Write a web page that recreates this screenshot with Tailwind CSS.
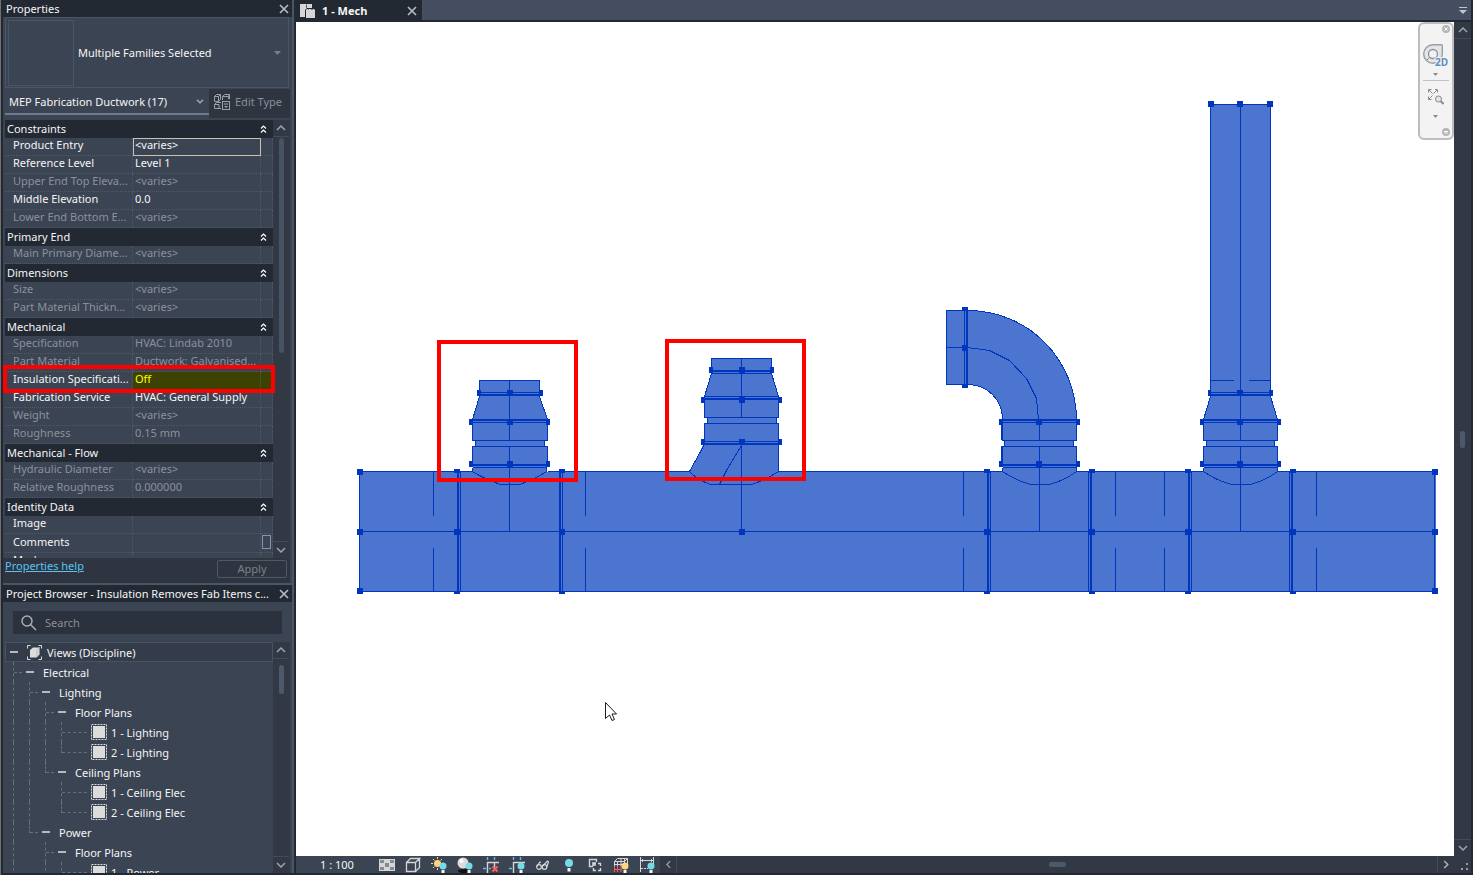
<!DOCTYPE html>
<html lang="en">
<head>
    <meta charset="UTF-8">
    <meta name="viewport" content="width=device-width, initial-scale=1.0">
    <title>1 - Mech</title>
    <script src="https://cdn.jsdelivr.net/npm/@tailwindcss/browser@4"></script>
</head>
<body class="flex h-screen overflow-hidden bg-[#222933] font-['Noto_Sans','Open_Sans',sans-serif] text-[11px] leading-4 text-[#f5f5f5]">
    <!-- Shared icons -->
    <svg class="hidden">
        <symbol id="close" viewBox="0 0 10 10"><path d="M1 1l8 8M9 1L1 9" stroke="#b4b9c2" stroke-width="1.7" fill="none"/></symbol>
        <symbol id="up" viewBox="0 0 10 6"><path d="M1 5l4-4 4 4" stroke="#9aa3b0" stroke-width="1.5" fill="none"/></symbol>
        <symbol id="down" viewBox="0 0 10 6"><path d="M1 1l4 4 4-4" stroke="#9aa3b0" stroke-width="1.5" fill="none"/></symbol>
        <symbol id="collapse" viewBox="0 0 7 8"><path d="M1 3.5l2.500-2.500 2.500 2.500M1 7.500l2.500-2.500 2.500 2.500" stroke="#fff" stroke-width="1.2" fill="none"/></symbol>
        <symbol id="plan" viewBox="0 0 16 16"><rect x=".5" y=".5" width="15" height="15" fill="none" stroke="#dcdcdc" stroke-dasharray="2 1"/><rect x="2" y="2" width="12" height="12" fill="#dcdcdc"/></symbol>
    </svg>

    <!-- Docked panels -->
    <aside class="flex w-[296px] shrink-0 flex-col border-l border-[#707070] pl-[2px] pr-[2px] pb-[2px]">
        <div class="flex min-h-0 grow flex-col border-r-2 border-[#4a5566]">
            <!-- Properties -->
            <section class="flex h-[585px] shrink-0 flex-col border-b-2 border-[#4a5566] bg-[#3b4453]">
                <header class="flex h-[17px] items-center justify-between bg-[#222933] pl-[3px] pr-[3px]">
                    <h2>Properties</h2>
                    <button aria-label="Close properties"><svg class="size-[10px]"><use href="#close"/></svg></button>
                </header>
                <div class="ml-[2px] mr-[3px] flex h-[71px] items-center border border-[#4a5566] pl-[2px] pr-[7px]">
                    <div class="size-[66px] border border-[#4a5566]"></div>
                    <span class="grow pl-1">Multiple Families Selected</span>
                    <svg class="h-1 w-[7px]" viewBox="0 0 7 4"><path d="M0 0h7L3.500 4z" fill="#74808f"/></svg>
                </div>
                <div class="mx-[2px] flex h-8 pt-px">
                    <div class="relative flex h-[26px] w-[204px] items-center border-b-2 border-[#6c7a90]">
                        <select aria-label="Category filter" class="h-full w-full appearance-none bg-transparent pl-1 pt-px outline-none">
                            <option>MEP Fabrication Ductwork (17)</option>
                        </select>
                        <svg class="pointer-events-none absolute right-[5px] h-[5px] w-[8px]" viewBox="0 0 8 5"><path d="M1 .8l3 3 3-3" stroke="#9aa3b0" stroke-width="1.600" fill="none"/></svg>
                    </div>
                    <button class="flex h-[29px] grow items-center gap-[5px] whitespace-nowrap bg-[#2e3440] pb-1 pl-[5px] text-[#8a8f98]">
                        <svg class="size-4" viewBox="0 0 16 16" fill="none" stroke="#9b9fa6"><path d="M.5 7.500v-5l2-2h4l-2 2h-4m4 0v5h-4M6.500.5v5l-2 2M8.500 6V2.500l2-2h5l-1 2h-6m6 0V5m1-4.500V5M7 14.500H.5v-4l2-2H7m-6.500 2H5v4"/><rect x="8.500" y="7.500" width="7" height="8"/><path d="M10 10h4M10.500 12.500h3M12 12v2"/></svg>
                        Edit Type
                    </button>
                </div>
                <div class="ml-[2px] flex h-[438px]">
                    <div class="w-[268px] overflow-hidden">
                        <table class="w-full table-fixed border-separate border-spacing-0 text-left [&_button]:block [&_td]:h-[18px] [&_td]:overflow-hidden [&_td]:border-b [&_td]:border-r [&_td]:border-dotted [&_td]:border-[#4d5868] [&_td]:pl-[2px] [&_td]:whitespace-nowrap [&_td]:pt-0 [&_td]:pb-[3px] [&_td]:leading-[14px] [&_td:first-child]:pl-2 [&_th]:h-[18px] [&_th]:bg-[#222933] [&_th]:pl-[2px] [&_th]:font-normal [&_tr]:h-[18px]">
                            <colgroup><col class="w-[128px]"><col class="w-[128px]"><col class="w-[12px]"></colgroup>
                            <tbody>
                                <tr><th colspan="2">Constraints</th><th><button aria-label="Collapse Constraints" class="-ml-[3px] h-2"><svg class="h-2 w-[7px]"><use href="#collapse"/></svg></button></th></tr>
                                <tr><td>Product Entry</td><td class="outline outline-[#cfc0ae] -outline-offset-1">&lt;varies&gt;</td><td></td></tr>
                                <tr><td>Reference Level</td><td>Level 1</td><td></td></tr>
                                <tr class="text-[#8b919b]"><td>Upper End Top Eleva...</td><td>&lt;varies&gt;</td><td></td></tr>
                                <tr><td>Middle Elevation</td><td>0.0</td><td></td></tr>
                                <tr class="text-[#8b919b]"><td>Lower End Bottom E...</td><td>&lt;varies&gt;</td><td></td></tr>
                            </tbody>
                            <tbody>
                                <tr><th colspan="2">Primary End</th><th><button aria-label="Collapse Primary End" class="-ml-[3px] h-2"><svg class="h-2 w-[7px]"><use href="#collapse"/></svg></button></th></tr>
                                <tr class="text-[#8b919b]"><td>Main Primary Diame...</td><td>&lt;varies&gt;</td><td></td></tr>
                            </tbody>
                            <tbody>
                                <tr><th colspan="2">Dimensions</th><th><button aria-label="Collapse Dimensions" class="-ml-[3px] h-2"><svg class="h-2 w-[7px]"><use href="#collapse"/></svg></button></th></tr>
                                <tr class="text-[#8b919b]"><td>Size</td><td>&lt;varies&gt;</td><td></td></tr>
                                <tr class="text-[#8b919b]"><td>Part Material Thickn...</td><td>&lt;varies&gt;</td><td></td></tr>
                            </tbody>
                            <tbody>
                                <tr><th colspan="2">Mechanical</th><th><button aria-label="Collapse Mechanical" class="-ml-[3px] h-2"><svg class="h-2 w-[7px]"><use href="#collapse"/></svg></button></th></tr>
                                <tr class="text-[#8b919b]"><td>Specification</td><td>HVAC: Lindab 2010</td><td></td></tr>
                                <tr class="text-[#8b919b]"><td>Part Material</td><td>Ductwork: Galvanised...</td><td></td></tr>
                                <tr><td>Insulation Specificati...</td><td class="bg-[#3d4200] text-[#ffff00]">Off</td><td class="bg-[#3d4200]"></td></tr>
                                <tr><td>Fabrication Service</td><td>HVAC: General Supply</td><td></td></tr>
                                <tr class="text-[#8b919b]"><td>Weight</td><td>&lt;varies&gt;</td><td></td></tr>
                                <tr class="text-[#8b919b]"><td>Roughness</td><td>0.15 mm</td><td></td></tr>
                            </tbody>
                            <tbody>
                                <tr><th colspan="2">Mechanical - Flow</th><th><button aria-label="Collapse Mechanical - Flow" class="-ml-[3px] h-2"><svg class="h-2 w-[7px]"><use href="#collapse"/></svg></button></th></tr>
                                <tr class="text-[#8b919b]"><td>Hydraulic Diameter</td><td>&lt;varies&gt;</td><td></td></tr>
                                <tr class="text-[#8b919b]"><td>Relative Roughness</td><td>0.000000</td><td></td></tr>
                            </tbody>
                            <tbody>
                                <tr><th colspan="2">Identity Data</th><th><button aria-label="Collapse Identity Data" class="-ml-[3px] h-2"><svg class="h-2 w-[7px]"><use href="#collapse"/></svg></button></th></tr>
                                <tr><td>Image</td><td></td><td></td></tr>
                                <tr><td>Comments</td><td></td><td><button aria-label="Edit comments" class="-ml-px mt-px h-[14px] w-[9px] border border-[#8494ad]"></button></td></tr>
                                <tr><td>Mark</td><td></td><td></td></tr>
                            </tbody>
                        </table>
                    </div>
                    <div class="flex w-[17px] flex-col items-center bg-[#323945] pr-px">
                        <div class="flex h-[17px] w-full items-center justify-center border-b border-[#414c5b]"><svg class="h-[6px] w-[10px]"><use href="#up"/></svg></div>
                        <div class="mt-px h-[215px] w-[5px] rounded-full bg-[#465363]"></div>
                        <div class="mt-auto flex h-[17px] w-full items-center justify-center border-t border-[#414c5b]"><svg class="h-[6px] w-[10px]"><use href="#down"/></svg></div>
                    </div>
                </div>
                <footer class="mr-[2px] flex grow justify-between bg-[#2e3440] pl-[2px]">
                    <a href="#" class="text-[#5cc3f0] underline">Properties help</a>
                    <button class="mr-[3px] mt-[2px] h-[18px] w-[70px] rounded-xs border border-[#505865] text-[#7c828c]">Apply</button>
                </footer>
            </section>

            <!-- Project Browser -->
            <section class="flex min-h-0 grow flex-col bg-[#3b4453]">
                <header class="flex h-[17px] shrink-0 items-center justify-between bg-[#222933] pl-[3px] pr-[3px]">
                    <h2 class="whitespace-nowrap">Project Browser - Insulation Removes Fab Items c...</h2>
                    <button aria-label="Close project browser"><svg class="size-[10px]"><use href="#close"/></svg></button>
                </header>
                <label class="mt-[9px] mb-2 ml-[10px] mr-[10px] flex h-[23px] shrink-0 items-center gap-2 bg-[#2b313d] pl-2">
                    <svg class="size-4 shrink-0" viewBox="0 0 16 16" fill="none" stroke="#a9adb5" stroke-width="1.500"><circle cx="6" cy="6" r="5"/><path d="M9.500 9.500L15 15"/></svg>
                    <input type="search" aria-label="Search" placeholder="Search" class="w-full min-w-0 bg-transparent outline-none placeholder:text-[#8a8f98]">
                </label>
                <div class="ml-[2px] flex min-h-0 grow">
                    <ul class="w-[268px] shrink-0 overflow-hidden [&_li]:flex [&_li]:h-5 [&_li]:items-center [&_i]:h-full [&_i]:w-4 [&_i]:shrink-0 [&_i]:border-l [&_i]:border-dashed [&_i]:border-[#666f7c] [&_b]:block [&_b]:h-[11px] [&_b]:w-2 [&_b]:border-b [&_b]:border-dashed [&_b]:border-[#666f7c] [&_button]:mr-[9px] [&_button]:h-[2px] [&_button]:w-2 [&_button]:bg-[#b4b9c2] [&_span]:pt-px">
                        <li class="border border-[#465363] bg-[#343c4a] pl-1"><button aria-label="Toggle Views"></button><svg class="mr-[5px] size-[15px]" viewBox="0 0 15 15" fill="none" stroke="#dcdcdc"><path d="M.5 3.500v-3h3M11.500.5h3v3M14.500 11.500v3h-3M3.500 14.500h-3v-3"/><path d="M3 5l3-2.500h6.500v7L9.500 12.500H3z" fill="#dcdcdc" stroke="none"/><path d="M10 12V5.500l2.500-3" stroke="#b4b9c2"/></svg><span>Views (Discipline)</span></li>
                        <li class="pl-2"><i class="max-w-[13px]"><b></b></i><button aria-label="Toggle Electrical"></button><span>Electrical</span></li>
                        <li class="pl-2"><i></i><i class="max-w-[13px]"><b></b></i><button aria-label="Toggle Lighting"></button><span>Lighting</span></li>
                        <li class="pl-2"><i></i><i></i><i class="max-w-[13px]"><b></b></i><button aria-label="Toggle Floor Plans"></button><span>Floor Plans</span></li>
                        <li class="pl-2"><i></i><i></i><i></i><i class="min-w-[30px]"><b class="min-w-[25px]"></b></i><svg class="mr-1 size-4"><use href="#plan"/></svg><span>1 - Lighting</span></li>
                        <li class="pl-2"><i></i><i></i><i></i><i class="mb-auto max-h-[11px] min-w-[30px]"><b class="min-w-[25px]"></b></i><svg class="mr-1 size-4"><use href="#plan"/></svg><span>2 - Lighting</span></li>
                        <li class="pl-2"><i></i><i></i><i class="mb-auto max-h-[11px] max-w-[13px]"><b></b></i><button aria-label="Toggle Ceiling Plans"></button><span>Ceiling Plans</span></li>
                        <li class="pl-2"><i></i><i class="mr-4"></i><i class="min-w-[30px]"><b class="min-w-[25px]"></b></i><svg class="mr-1 size-4"><use href="#plan"/></svg><span>1 - Ceiling Elec</span></li>
                        <li class="pl-2"><i></i><i class="mr-4"></i><i class="mb-auto max-h-[11px] min-w-[30px]"><b class="min-w-[25px]"></b></i><svg class="mr-1 size-4"><use href="#plan"/></svg><span>2 - Ceiling Elec</span></li>
                        <li class="pl-2"><i></i><i class="mb-auto max-h-[11px] max-w-[13px]"><b></b></i><button aria-label="Toggle Power"></button><span>Power</span></li>
                        <li class="pl-2"><i class="mr-4"></i><i class="max-w-[13px]"><b></b></i><button aria-label="Toggle Power Floor Plans"></button><span>Floor Plans</span></li>
                        <li class="pl-2"><i class="mr-4"></i><i></i><i class="min-w-[30px]"><b class="min-w-[25px]"></b></i><svg class="mr-1 size-4"><use href="#plan"/></svg><span>1 - Power</span></li>
                    </ul>
                    <div class="flex w-[17px] flex-col items-center bg-[#323945] pr-px">
                        <div class="flex h-[17px] w-full shrink-0 items-center justify-center border-b border-[#414c5b]"><svg class="h-[6px] w-[10px]"><use href="#up"/></svg></div>
                        <div class="mt-[6px] h-[29px] w-[5px] rounded-full bg-[#4b596b]"></div>
                        <div class="mt-auto flex h-[17px] w-full items-center justify-center border-t border-[#414c5b]"><svg class="h-[6px] w-[10px]"><use href="#down"/></svg></div>
                    </div>
                </div>
            </section>
        </div>
    </aside>
    <!-- Callout round the Insulation Specification row -->
    <div class="pointer-events-none absolute left-[3px] top-[365px] h-7 w-[272px] border-4 border-[#ff0000]"></div>

    <!-- Drawing area -->
    <main class="flex min-w-0 grow flex-col pr-[2px] pb-[2px]">
        <!-- View tabs -->
        <nav class="flex h-[22px] shrink-0 bg-[#222933]">
            <div class="flex w-[126px] items-center pl-1 pr-[5px]">
                <svg class="size-4" viewBox="0 0 16 16"><path d="M0 1h6v5H5v8H0zM7 1h5v4H7zM6 6h8l1 1v8H6z" fill="#d6d6d6"/><path d="M6.500 1v5M5 6.500h4M11 6.500h4" stroke="#7a7f87" stroke-dasharray="2 1"/></svg>
                <span class="grow pl-[6px] font-bold">1 - Mech</span>
                <button aria-label="Close 1 - Mech"><svg class="size-[10px]"><use href="#close"/></svg></button>
            </div>
            <div class="flex h-5 grow items-center justify-end bg-[#454e60] pr-1">
                <svg class="h-[7px] w-2" viewBox="0 0 8 7"><path d="M0 0h8v1H0zM0 3h8L4 7z" fill="#c0c4cb"/></svg>
            </div>
        </nav>

        <div class="flex min-h-0 grow">
            <div class="relative min-w-0 grow bg-white">
                <svg class="block h-full w-full" viewBox="296 22 1158 834" role="img" aria-label="Ductwork elevation">
                    <g transform="translate(.5 .5)" fill="#4b75cf" stroke="#0036bd" shape-rendering="crispEdges">
                        <!-- Trunk -->
                        <path d="M359 471h1076v120H359z" stroke="none"/>
                        <path fill="none" d="M472 471H359v120h1075V471h-157M547 471h184M752 471h250M1076 471h127M359 531h1076"/>
                        <path fill="none" d="M460 471v120M562 471v120M990 471v120M1088 471v120M1191 471v120M1289 471v120"/>
                        <path fill="none" d="M433 471v44m0 32v44M585 471v44m0 32v44M963 471v44m0 32v44M1115 471v44m0 32v44M1164 471v44m0 32v44M1316 471v44m0 32v44"/>
                        <!-- First branch -->
                        <path d="M479 380h60v15l8 25v20h-3v6h3v18l-1 7q-18 13-37 13t-37-13v-25h3v-6h-3v-20l7-25z" stroke="none"/>
                        <path fill="none" d="M479 394v-14h60v14M479 392h60M479 396l-7 23M539 396l8 23M472 422h75M472 420v20h75v-20M475 440v6M544 440v6M472 464v-18h75v18M472 467h74M472 467v4q11 7 28 13h19q15-5 27-13v-4M509 380v60M509 446v85"/>
                        <!-- Second branch -->
                        <path d="M711 358h60v15l7 25v19h-2v6h2v49q-14 8-27 12h-41q-14-5-21-13l15-29v-19h3v-6h-3v-19l7-25z" stroke="none"/>
                        <path fill="none" d="M711 370v-12h60v12M711 373h60M711 373l-7 23h74l-7-23M704 396v21h74v-21M707 417v6M776 417v6M704 442v-19h74v48q-14 9-27 13h-41q-14-5-21-13l15-27M704 441h74M741 445l-15 25-7 14M741 358v59M741 444v87"/>
                        <!-- Elbow branch -->
                        <path d="M946 310h21c61 0 109 49 109 110v20h-3v6h3v25q-17 13-37 13t-37-13v-25h2v-6h-2v-21c0-20-15-35-35-35h-21z" stroke="none"/>
                        <path fill="none" d="M967 310h-21v74h21M967 310c61 0 109 49 109 110M967 384c20 0 35 15 35 35M964 310v74M946 347h21l22 3 20 10 17 18 10 20 2 22M1002 422h74M1002 420v20h74v-20M1004 440v6M1073 440v6M1002 464v-18h74v18M1002 467h74M1002 467v4q13 9 28 13h19q15-4 27-13v-4M1039 420v20M1039 446v85"/>
                        <!-- Riser branch -->
                        <path d="M1210 104h60v291l7 25v20h-3v6h3v25q-17 13-37 13t-37-13v-25h3v-6h-3v-20l7-25z" stroke="none"/>
                        <path fill="none" d="M1210 394V104h60v290M1210 380h23M1248 380h22M1210 392h60M1210 396l-7 23M1270 396l7 23M1203 422h74M1203 420v20h74v-20M1206 440v6M1274 440v6M1203 464v-18h74v18M1203 467h74M1203 467v4q13 9 28 13h19q15-4 27-13v-4M1240 104v336M1240 446v85"/>
                    </g>
                    <!-- Flanges and grips -->
                    <g fill="#0036bd" shape-rendering="crispEdges">
                        <path d="M457 471h2v120h-2zM559 471h2v120h-2zM987 471h2v120h-2zM1090 471h2v120h-2zM1188 471h2v120h-2zM1291 471h2v120h-2z"/>
                        <path d="M479 394h61v2h-61zM472 419h76v2h-76zM472 464h76v2h-76zM711 370h61v2h-61zM704 398h75v2h-75zM704 443h75v2h-75zM966 310h2v75h-2zM1002 419h75v2h-75zM1002 464h75v2h-75zM1210 394h61v2h-61zM1203 419h75v2h-75zM1203 464h75v2h-75zM1001 420h2v20h-2zM1001 446h2v19h-2z"/>
                        <path d="M357 469h6v6h-6zM357 529h6v6h-6zM357 588h6v6h-6zM1432 469h6v6h-6zM1432 529h6v6h-6zM1432 588h6v6h-6zM739 529h6v6h-6z"/>
                        <path d="M454 469h6v4h-6zM559 469h6v4h-6zM984 469h6v4h-6zM1089 469h6v4h-6zM1185 469h6v4h-6zM1290 469h6v4h-6z"/>
                        <path d="M454 529h6v6h-6zM559 529h6v6h-6zM984 529h6v6h-6zM1089 529h6v6h-6zM1185 529h6v6h-6zM1290 529h6v6h-6z"/>
                        <path d="M454 591h6v3h-6zM559 591h6v3h-6zM984 591h6v3h-6zM1089 591h6v3h-6zM1185 591h6v3h-6zM1290 591h6v3h-6z"/>
                        <path d="M477 390h4v6h-4zM507 390h6v6h-6zM539 390h4v6h-4zM469 419h4v6h-4zM507 419h6v6h-6zM546 419h4v6h-4zM469 461h4v6h-4zM507 461h6v6h-6zM546 461h4v6h-4z"/>
                        <path d="M709 367h4v6h-4zM739 367h6v6h-6zM770 367h4v6h-4zM701 397h4v6h-4zM739 397h6v6h-6zM778 397h4v6h-4zM701 439h4v6h-4zM739 439h6v6h-6zM778 439h4v6h-4z"/>
                        <path d="M962 307h6v4h-6zM962 345h6v6h-6zM962 384h6v4h-6zM999 419h4v6h-4zM1036 419h6v6h-6zM1076 419h4v6h-4zM999 461h4v6h-4zM1036 461h6v6h-6zM1076 461h4v6h-4z"/>
                        <path d="M1208 101h6v6h-6zM1237 101h6v6h-6zM1267 101h6v6h-6zM1208 390h3v6h-3zM1237 390h6v6h-6zM1269 390h4v6h-4zM1200 419h4v6h-4zM1237 419h6v6h-6zM1277 419h4v6h-4zM1200 461h4v6h-4zM1237 461h6v6h-6zM1277 461h4v6h-4z"/>
                    </g>
                    <!-- Callouts -->
                    <g fill="none" stroke="#ff0000" stroke-width="4">
                        <path d="M439 342h137v138H439z"/>
                        <path d="M667 341h137v138H667z"/>
                    </g>
                    <path d="M605.500 702.500v16l4-3.500 2.500 5.500 2.500-1-2.500-5.500h4.500z" fill="#fff" stroke="#1c1c1c"/>
                </svg>

                <!-- Navigation bar -->
                <div class="absolute right-0 top-0 flex h-[118px] w-9 flex-col items-center rounded-md border-2 border-[#bdbdbd] bg-[#f3f3f3] pr-px">
                    <button aria-label="Close navigation bar" class="ml-auto mr-px mt-px"><svg class="size-2" viewBox="0 0 8 8"><circle cx="4" cy="4" r="4" fill="#b5b5b5"/><path d="M2.500 2.500l3 3m0-3l-3 3" stroke="#fff"/></svg></button>
                    <button aria-label="Steering wheel" class="mt-[11px]"><svg class="h-6 w-[26px]" viewBox="0 0 26 24"><path d="M10 .7h8.300a1 1 0 011 1V10A9.300 9.300 0 1110 .7z" fill="#e3e5e8" stroke="#9b9ea3" stroke-width="1.400"/><circle cx="10" cy="10" r="4.500" fill="#f3f3f3" stroke="#8d9096" stroke-width="1.300"/><path d="M4 16l3-3M13 13l3 3" stroke="#8d9096"/><text x="12" y="22" font-size="10" font-weight="bold" fill="#5f8fc4" stroke="#f3f3f3" stroke-width="2" paint-order="stroke">2D</text></svg></button>
                    <svg class="mt-[5px] h-[3px] w-[5px]" viewBox="0 0 5 3"><path d="M0 0h5L2.500 3z" fill="#8a8a8a"/></svg>
                    <div class="mt-1 h-px w-[26px] bg-[#c2c2c2]"></div>
                    <button aria-label="Zoom" class="mt-2"><svg class="size-4" viewBox="0 0 16 16" fill="none" stroke="#8a8a8a"><path d="M1 1l3.500 3.500M9 1L5.500 4.500M1 10l3.500-3.500M.5 3.500v-3h3M7 .5h2.500v3M.5 7.500v3h3"/><circle cx="10.500" cy="10" r="3" fill="#dfe9e4"/><path d="M12.800 12.300L15.500 15" stroke-width="2"/></svg></button>
                    <svg class="mt-[10px] h-[3px] w-[5px]" viewBox="0 0 5 3"><path d="M0 0h5L2.500 3z" fill="#8a8a8a"/></svg>
                    <button aria-label="Navigation bar options" class="mt-auto mr-px mb-[2px] ml-auto"><svg class="size-2" viewBox="0 0 8 8"><circle cx="4" cy="4" r="4" fill="#b5b5b5"/><path d="M2 3.500h4M2.500 5h3" stroke="#fff"/></svg></button>
                </div>
            </div>
            <div class="flex w-[17px] shrink-0 flex-col items-center bg-[#323945]">
                <div class="flex h-[17px] w-full items-center justify-center border-b border-[#414c5b]"><svg class="h-[6px] w-[10px]"><use href="#up"/></svg></div>
                <div class="my-auto h-[17px] w-[5px] rounded-xs bg-[#4b596b]"></div>
                <div class="flex h-[17px] w-full items-center justify-center border-t border-[#414c5b]"><svg class="h-[6px] w-[10px]"><use href="#down"/></svg></div>
            </div>
        </div>

        <!-- View control bar -->
        <footer class="flex h-[17px] shrink-0 bg-[#323945]">
            <div class="flex w-[364px] items-center gap-[10px] bg-[#3b4453] pl-6 [&_svg]:size-4">
                <button class="mr-4 w-[33px] whitespace-nowrap">1 : 100</button>
                <button aria-label="Detail level"><svg viewBox="0 0 16 16"><path d="M0 2h16v12H0z" fill="#d6d6d6"/><path d="M1 3h4v3H1zM11 3h4v3h-4zM6 6h4v4H6zM1 10h4v3H1zM11 10h4v3h-4z" fill="#858b93"/></svg></button>
                <button aria-label="Visual style"><svg viewBox="0 0 16 16" fill="none" stroke="#d6d6d6" stroke-width="1.300"><path d="M1.500 5.500h9v9h-9zM1.500 5.500l4-4h9l-4 4M14.500 1.500v9l-4 4"/></svg></button>
                <button aria-label="Sun path"><svg viewBox="0 0 16 16"><circle cx="6.500" cy="6.500" r="3.500" fill="#ffd480"/><path d="M6.500 0v2M6.500 11v2M0 6.500h2M2 2l1.500 1.500M11 2L9.500 3.500M2 11l1.500-1.500" stroke="#ffd480"/><circle cx="12" cy="9" r="3.500" fill="#74dbe8"/><path d="M10.500 13h3v3h-3z" fill="#f5f5f5"/></svg></button>
                <button aria-label="Shadows"><svg viewBox="0 0 16 16"><ellipse cx="7" cy="14" rx="6" ry="2" fill="#111"/><circle cx="6" cy="6" r="5.500" fill="#dcdcdc"/><circle cx="4.500" cy="4" r="2" fill="#fff"/><circle cx="12" cy="9" r="3.500" fill="#74dbe8"/><path d="M10.500 13h3v3h-3z" fill="#f5f5f5"/></svg></button>
                <button aria-label="Crop view"><svg viewBox="0 0 16 16" fill="none" stroke="#d6d6d6" stroke-width="1.400"><path d="M4.500 16V5.500H16M11.500 5v6"/><path d="M4.500 0v3M11.500 0v3M0 11.500h3M6 11.500h2" stroke="#64b8ee"/><path d="M9.500 9.500l5 5m0-5l-5 5" stroke="#ff5b5b" stroke-width="2"/></svg></button>
                <button aria-label="Show crop region"><svg viewBox="0 0 16 16" fill="none"><path d="M4.500 16V5.500H16" stroke="#d6d6d6" stroke-width="1.400"/><path d="M4.500 0v3M11.500 0v3M0 11.500h3" stroke="#64b8ee" stroke-width="1.400"/><circle cx="12" cy="9" r="3.500" fill="#74dbe8"/><path d="M10.500 13h3v3h-3z" fill="#f5f5f5"/></svg></button>
                <button aria-label="Temporary hide"><svg viewBox="0 0 16 16" fill="none" stroke="#d6d6d6" stroke-width="1.200"><circle cx="4" cy="10" r="2.300"/><circle cx="9.500" cy="10" r="2.300"/><path d="M1.700 9.500L5 5l1 .5M7.200 9.500L12.500 4l1 1L11.800 10"/></svg></button>
                <button aria-label="Reveal hidden elements"><svg viewBox="0 0 16 16"><circle cx="8" cy="6" r="4" fill="#74dbe8"/><path d="M6.500 11h3v3.500h-3z" fill="#f5f5f5"/></svg></button>
                <button aria-label="Temporary view properties"><svg viewBox="0 0 16 16" fill="none" stroke="#d6d6d6" stroke-width="1.400"><path d="M6 9.500H2.500v-7h7V5"/><path d="M5 5h4v4H5z" fill="#a9adb5" stroke="none"/><path d="M6.500 9V6.500H9M11 6.500h2.500V9M13.500 11v2.500H11M9 13.500H6.500V11"/></svg></button>
                <button aria-label="Analytical model"><svg viewBox="0 0 16 16" fill="none" stroke="#d6d6d6"><path d="M1.500 9V4.500l3-3h10V8M1.500 4.500h10l3-3M4.500 4v5M8 1v8M11.500 1v6M1 7.500h8"/><path d="M1.500 9v6M4.500 9v6M8 9v6M1 12.500h8" stroke="#e96161"/><circle cx="12" cy="9" r="3.500" fill="#ffd480" stroke="none"/><path d="M10.500 13h3v3h-3z" fill="#f5f5f5" stroke="none"/></svg></button>
                <button aria-label="Reveal constraints"><svg viewBox="0 0 16 16" fill="none" stroke="#d6d6d6"><path d="M1.500 0v15M14.500 0v8M2 3.500h12M4 2L2.500 3.500 4 5M12 2l1.500 1.500L12 5"/><path d="M2 11.500h7" stroke-dasharray="2 1"/><circle cx="12" cy="9" r="3.500" fill="#74dbe8" stroke="none"/><path d="M10.500 13h3v3h-3z" fill="#f5f5f5" stroke="none"/></svg></button>
            </div>
            <button aria-label="Scroll left" class="flex w-[17px] items-center justify-center border-r border-[#414c5b]"><svg class="h-[9px] w-[5px]" viewBox="0 0 6 10"><path d="M5 1L1 5l4 4" stroke="#9aa3b0" stroke-width="1.500" fill="none"/></svg></button>
            <div class="flex grow items-center justify-center"><div class="h-[5px] w-[17px] rounded-xs bg-[#4b596b]"></div></div>
            <button aria-label="Scroll right" class="flex w-[17px] items-center justify-center border-l border-[#414c5b]"><svg class="h-[9px] w-[6px]" viewBox="0 0 6 10"><path d="M1 1l4 4-4 4" stroke="#b4b9c2" stroke-width="1.500" fill="none"/></svg></button>
            <div class="flex w-[17px] items-end justify-end pr-[3px] pb-[3px]"><svg class="size-[7px]" viewBox="0 0 7 7"><path d="M5 0h2v2H5zM5 5h2v2H5zM0 5h2v2H0z" fill="#9a9a9a"/></svg></div>
        </footer>
    </main>
</body>
</html>
